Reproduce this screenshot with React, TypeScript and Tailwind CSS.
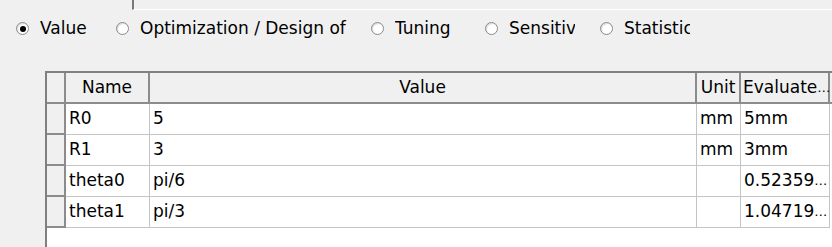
import React from 'react';

const options = [
  { label: 'Value', width: 'w-[100px]', textWidth: 'w-[60px]', checked: true },
  { label: 'Optimization / Design of', width: 'w-[255px]', textWidth: 'w-[222px]', checked: false },
  { label: 'Tuning', width: 'w-[114px]', textWidth: 'w-[80px]', checked: false },
  { label: 'Sensitiv', width: 'w-[115px]', textWidth: 'w-[66px]', checked: false },
  { label: 'Statistic', width: 'w-[120px]', textWidth: 'w-[66px]', checked: false },
];

const rows = [
  { name: 'R0', value: '5', unit: 'mm', evaluated: '5mm', more: false },
  { name: 'R1', value: '3', unit: 'mm', evaluated: '3mm', more: false },
  { name: 'theta0', value: 'pi/6', unit: '', evaluated: '0.52359', more: true },
  { name: 'theta1', value: 'pi/3', unit: '', evaluated: '1.04719', more: true },
];

function Radio({ checked }: { checked: boolean }) {
  return (
    <span className="flex h-[13px] w-[13px] shrink-0 items-center justify-center rounded-full border border-[#8a8a8a] bg-white shadow-[inset_1px_1px_1px_rgba(0,0,0,0.15)]">
      {checked && <span className="h-[6px] w-[6px] rounded-full bg-black" />}
    </span>
  );
}

const cols = 'grid grid-cols-[19px_84px_547px_44px_89px_1fr]';

export default function App() {
  return (
    <div className="relative h-[247px] w-[832px] overflow-hidden bg-[#f0f0f0] font-['DejaVu_Sans',sans-serif] text-[17px] text-black">
      {/* frame corner above */}
      <div className="ml-[132px] h-[10px] border-b border-l-2 border-b-white border-l-[#7a7a7a]" />

      {/* radio options */}
      <div className="flex h-[37px] items-center pl-[16px]">
        {options.map((o) => (
          <label key={o.label} className={`flex items-center gap-[11px] ${o.width}`}>
            <Radio checked={o.checked} />
            <span className={`overflow-x-clip whitespace-nowrap ${o.textWidth}`}>{o.label}</span>
          </label>
        ))}
      </div>

      {/* table */}
      <div className="ml-[45px] mt-[24px] h-[200px] border-l-2 border-t-2 border-[#808080] bg-white">
        <div className={`${cols} h-[31px] bg-[#f0f0f0]`}>
          <div className="border-b-2 border-r-2 border-[#8c8c8c]" />
          <div className="flex items-center justify-center border-b-2 border-r-2 border-[#8c8c8c]">Name</div>
          <div className="flex items-center justify-center border-b-2 border-r-2 border-[#8c8c8c]">Value</div>
          <div className="flex items-center justify-center border-b-2 border-r-2 border-[#8c8c8c]">Unit</div>
          <div className="flex items-center whitespace-nowrap border-b-2 border-r-2 border-[#8c8c8c] pl-[2px]">
            Evaluate<span className="text-[13px]">…</span>
          </div>
          <div className="border-b-2 border-[#8c8c8c]" />
        </div>
        {rows.map((r) => (
          <div key={r.name} className={`${cols} h-[31px]`}>
            <div className="border-b-2 border-r-2 border-[#8c8c8c] bg-[#f0f0f0]" />
            <div className="flex items-center border-b border-r border-[#c4c4c4] pl-[3px]">{r.name}</div>
            <div className="flex items-center border-b border-r border-[#c4c4c4] pl-[3px]">{r.value}</div>
            <div className="flex items-center border-b border-r border-[#c4c4c4] pl-[3px]">{r.unit}</div>
            <div className="flex items-center whitespace-nowrap border-b border-r border-[#c4c4c4] pl-[3px]">
              {r.evaluated}
              {r.more && <span className="text-[13px]">…</span>}
            </div>
            <div />
          </div>
        ))}
      </div>
    </div>
  );
}
